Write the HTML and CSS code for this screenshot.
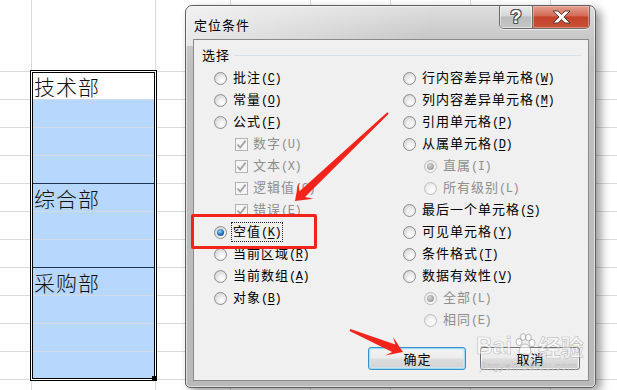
FILE: index.html
```html
<!DOCTYPE html>
<html lang="zh-CN">
<head>
<meta charset="utf-8">
<title>定位条件</title>
<link rel="stylesheet" href="styles.css">
</head>
<body>
<div class="sheet">
  <div class="sel">
    <div class="grp g1">
      <div class="cell active">技术部</div>
    </div>
    <div class="grp g2"><div class="cell">综合部</div></div>
    <div class="grp g3"><div class="cell">采购部</div></div>
    <span class="handle"></span>
  </div>
</div>

<div class="dialog">
  <div class="titlebar">
    <span class="title">定位条件</span>
    <div class="capbtns">
      <span class="cap help">?</span>
      <span class="cap close">
        <svg width="19" height="14" viewBox="0 0 19 14"><polygon points="1,1 6,1 9.5,4.6 13,1 18,1 12,7 18,13 13,13 9.5,9.4 6,13 1,13 7,7" fill="#fff" stroke="#5a3a34" stroke-width="1" stroke-linejoin="round"/></svg>
      </span>
    </div>
  </div>
  <div class="client">
    <div class="grouphead"><span class="glabel">选择</span><i class="gline"></i></div>
    <div class="cols">
      <div class="col left">
        <div class="opt"><span class="radio"></span><span class="lbl">批注<span class="key">(<u>C</u>)</span></span></div>
        <div class="opt"><span class="radio"></span><span class="lbl">常量<span class="key">(<u>O</u>)</span></span></div>
        <div class="opt"><span class="radio"></span><span class="lbl">公式<span class="key">(<u>F</u>)</span></span></div>
        <div class="opt sub off"><span class="chk"><svg width="11" height="11" viewBox="0 0 11 11"><path d="M1.5 5.5 L4.2 8.6 L9.6 1.6" fill="none" stroke="#a3a3a3" stroke-width="1.8"/></svg></span><span class="lbl">数字<span class="key">(U)</span></span></div>
        <div class="opt sub off"><span class="chk"><svg width="11" height="11" viewBox="0 0 11 11"><path d="M1.5 5.5 L4.2 8.6 L9.6 1.6" fill="none" stroke="#a3a3a3" stroke-width="1.8"/></svg></span><span class="lbl">文本<span class="key">(X)</span></span></div>
        <div class="opt sub off"><span class="chk"><svg width="11" height="11" viewBox="0 0 11 11"><path d="M1.5 5.5 L4.2 8.6 L9.6 1.6" fill="none" stroke="#a3a3a3" stroke-width="1.8"/></svg></span><span class="lbl">逻辑值<span class="key">(G)</span></span></div>
        <div class="opt sub off"><span class="chk"><svg width="11" height="11" viewBox="0 0 11 11"><path d="M1.5 5.5 L4.2 8.6 L9.6 1.6" fill="none" stroke="#a3a3a3" stroke-width="1.8"/></svg></span><span class="lbl">错误<span class="key">(E)</span></span></div>
        <div class="opt"><span class="radio on"></span><span class="lbl focus">空值<span class="key">(<u>K</u>)</span></span></div>
        <div class="opt"><span class="radio"></span><span class="lbl">当前区域<span class="key">(<u>R</u>)</span></span></div>
        <div class="opt"><span class="radio"></span><span class="lbl">当前数组<span class="key">(<u>A</u>)</span></span></div>
        <div class="opt"><span class="radio"></span><span class="lbl">对象<span class="key">(<u>B</u>)</span></span></div>
      </div>
      <div class="col right">
        <div class="opt"><span class="radio"></span><span class="lbl">行内容差异单元格<span class="key">(<u>W</u>)</span></span></div>
        <div class="opt"><span class="radio"></span><span class="lbl">列内容差异单元格<span class="key">(<u>M</u>)</span></span></div>
        <div class="opt"><span class="radio"></span><span class="lbl">引用单元格<span class="key">(<u>P</u>)</span></span></div>
        <div class="opt"><span class="radio"></span><span class="lbl">从属单元格<span class="key">(<u>D</u>)</span></span></div>
        <div class="opt sub off"><span class="radio dis on"></span><span class="lbl">直属<span class="key">(I)</span></span></div>
        <div class="opt sub off"><span class="radio dis"></span><span class="lbl">所有级别<span class="key">(L)</span></span></div>
        <div class="opt"><span class="radio"></span><span class="lbl">最后一个单元格<span class="key">(<u>S</u>)</span></span></div>
        <div class="opt"><span class="radio"></span><span class="lbl">可见单元格<span class="key">(<u>Y</u>)</span></span></div>
        <div class="opt"><span class="radio"></span><span class="lbl">条件格式<span class="key">(<u>T</u>)</span></span></div>
        <div class="opt"><span class="radio"></span><span class="lbl">数据有效性<span class="key">(<u>V</u>)</span></span></div>
        <div class="opt sub off"><span class="radio dis on"></span><span class="lbl">全部<span class="key">(L)</span></span></div>
        <div class="opt sub off"><span class="radio dis"></span><span class="lbl">相同<span class="key">(E)</span></span></div>
      </div>
    </div>
    <div class="btns">
      <span class="btn ok">确定</span>
      <span class="btn cancel">取消</span>
    </div>
  </div>
</div>

<div class="mark">
  <div class="mark-row">
    <span class="mark-en">Bai</span>
    <svg class="paw" width="24" height="24" viewBox="0 0 24 24">
      <g fill="rgba(255,255,255,.6)" stroke="rgba(110,110,110,.45)" stroke-width="1">
        <ellipse cx="6" cy="9" rx="3" ry="3.6"/>
        <ellipse cx="10" cy="4" rx="2.8" ry="3.4"/>
        <ellipse cx="15.5" cy="4.5" rx="2.8" ry="3.4"/>
        <ellipse cx="19" cy="10" rx="3" ry="3.6"/>
        <path d="M12 11 C16 11 19 17 17.5 20 C16 22.5 13 21 12 21 C11 21 8 22.5 6.5 20 C5 17 8 11 12 11 Z"/>
      </g>
    </svg>
    <span class="mark-cn">经验</span>
  </div>
  <div class="mark-url">jingyan.baidu.com</div>
</div>

<div class="hilite"></div>

<svg class="arrows" width="617" height="390" viewBox="0 0 617 390">
  <polygon points="295,201 313.5,198.7 305,197 388.7,113.7 387.3,112.3 299.5,191.2 298.3,182.7" fill="#f2231b"/>
  <polygon points="403,352 385.3,355.5 392.2,351.9 349.6,330.9 350.4,329.1 395.3,344.5 393,337" fill="#f2231b"/>
</svg>
</body>
</html>
```

FILE: styles.css
```css
* { box-sizing: border-box; }
html, body { margin: 0; padding: 0; }
body {
  width: 617px;
  height: 390px;
  overflow: hidden;
  position: relative;
  background: #fff;
  font-family: "Noto Sans CJK SC", "Noto Sans", sans-serif;
  color: #000;
}

/* ---------- spreadsheet ---------- */
.sheet {
  width: 617px;
  height: 390px;
  display: grid;
  grid-template-columns: 30px 127px 1fr;
  grid-template-rows: 70px 311px 1fr;
  background-image:
    repeating-linear-gradient(to bottom, #dadada 0 1px, transparent 1px 28px),
    linear-gradient(to right,
      transparent 0 31px, #dadada 31px 32px,
      transparent 32px 155px, #dadada 155px 156px,
      transparent 156px 230px, #dadada 230px 231px,
      transparent 231px 310px, #dadada 310px 311px,
      transparent 311px 390px, #dadada 390px 391px,
      transparent 391px 470px, #dadada 470px 471px,
      transparent 471px 550px, #dadada 550px 551px,
      transparent 551px);
  background-repeat: no-repeat;
  background-size: 100% 330px, 100% 100%;
  background-position: 0 71px, 0 0;
}
.sel {
  grid-column: 2;
  grid-row: 2;
  position: relative;
  border: 3px double #000;
  display: flex;
  flex-direction: column;
  background: #fff;
}
.grp {
  background: repeating-linear-gradient(to bottom, #b7d8fc 0 27px, #d2dbe5 27px 28px);
}
.g1 {
  height: 111px;
  border-bottom: 1px solid #1d3450;
  background: repeating-linear-gradient(to bottom, #b7d8fc 0 26px, #d2dbe5 26px 27px, #b7d8fc 27px 28px);
}
.g2 { height: 84px; border-bottom: 1px solid #1d3450; }
.g3 { height: 110px; }
.cell {
  font-size: 21px;
  font-weight: 300;
  letter-spacing: 1px;
  padding-left: 1px;
  height: 27px;
  line-height: 29px;
  color: #111;
}
.cell.active {
  height: 26px;
  line-height: 27px;
  background: #fff;
}
.handle {
  position: absolute;
  right: -3px;
  bottom: -3px;
  width: 5px;
  height: 5px;
  background: #000;
}

/* ---------- dialog ---------- */
.dialog {
  position: absolute;
  left: 185px;
  top: 5px;
  width: 411px;
  height: 383px;
  border: 1px solid #5c5f63;
  border-radius: 7px 7px 5px 5px;
  padding: 0 6px 6px 7px;
  display: flex;
  flex-direction: column;
  background:
    linear-gradient(100deg, rgba(255,255,255,.6) 0, rgba(255,255,255,.25) 35%, rgba(255,255,255,0) 60%) 0 0 / 100% 40px no-repeat,
    linear-gradient(to bottom, #dedede 0, #c9c9c9 30px, #c0c0c0 60px, #b9b9b9 100%);
  box-shadow: inset 0 0 0 1px rgba(255,255,255,.55), 5px 4px 10px rgba(0,0,0,.4);
}
.titlebar {
  height: 33px;
  display: flex;
  align-items: flex-start;
}
.title {
  padding: 11px 0 0 1px;
  font-size: 13px;
  line-height: 16px;
  letter-spacing: 1px;
}
.capbtns {
  margin-left: auto;
  margin-right: -1px;
  display: flex;
  height: 23px;
  border: 1px solid #6a6a6a;
  border-top: none;
  border-radius: 0 0 5px 5px;
  overflow: hidden;
  box-shadow: 0 1px 0 rgba(255,255,255,.6);
}
.cap {
  display: flex;
  align-items: center;
  justify-content: center;
}
.help {
  width: 33px;
  border-right: 1px solid #6a6a6a;
  background: linear-gradient(to bottom, #eaeaea 0, #d6d6d6 45%, #bcbcbc 50%, #c6c6c6 100%);
  box-shadow: inset 0 0 0 1px rgba(255,255,255,.5);
  font-family: "Liberation Sans", sans-serif;
  font-weight: bold;
  font-size: 18px;
  line-height: 20px;
  color: #fff;
  text-shadow: 1px 0 #4f4f4f, -1px 0 #4f4f4f, 0 1px #4f4f4f, 0 -1px #4f4f4f, 1px 1px #4f4f4f, -1px -1px #4f4f4f, 1px -1px #4f4f4f, -1px 1px #4f4f4f;
}
.close {
  width: 56px;
  background: linear-gradient(to bottom, #e4a090 0, #d46a55 45%, #c2412a 50%, #c95237 100%);
  box-shadow: inset 0 0 0 1px rgba(255,210,200,.45);
}

.client {
  flex: 1;
  border: 1px solid #8a8a8a;
  background: #f0f0f0;
  padding: 7px 7px 10px 8px;
  display: flex;
  flex-direction: column;
  font-size: 13px;
}
.grouphead {
  display: flex;
  align-items: center;
  height: 16px;
  line-height: 16px;
}
.glabel { letter-spacing: 1px; }
.gline {
  flex: 1;
  height: 1px;
  margin-left: 4px;
  background: #d5dfe5;
}
.cols {
  display: flex;
  margin-top: 4px;
}
.col.left {
  width: 201px;
  padding-left: 12px;
}
.col.right { flex: 1; }
.opt {
  display: flex;
  align-items: center;
  height: 22px;
  gap: 6px;
  white-space: nowrap;
}
.opt.sub { padding-left: 21px; }
.opt.off { color: #8e8e8e; }
.lbl {
  line-height: 16px;
  letter-spacing: 1px;
}
.key {
  font-family: "Liberation Mono", monospace;
  font-size: 12px;
  letter-spacing: -0.5px;
}
.key u { text-underline-offset: 2px; }
.focus {
  border: 1px dotted #222;
  padding: 0 1px;
  margin-left: -2px;
}

.radio {
  flex: none;
  width: 13px;
  height: 13px;
  border-radius: 50%;
  border: 1px solid #8d8d8d;
  background: radial-gradient(circle at 62% 68%, #ffffff 0, #efefef 35%, #cfcfcf 90%);
  display: grid;
  place-items: center;
}
.radio.on::after {
  content: "";
  width: 7px;
  height: 7px;
  border-radius: 50%;
  background: radial-gradient(circle at 40% 35%, #9ad8ff 0, #2c7fc4 45%, #0b3a6b 100%);
}
.radio.dis {
  border-color: #bdbdbd;
  background: radial-gradient(circle at 62% 68%, #ffffff 0, #f4f4f4 40%, #e2e2e2 90%);
}
.radio.dis.on::after {
  background: radial-gradient(circle at 40% 35%, #d8d8d8 0, #a8a8a8 55%, #8a8a8a 100%);
}
.chk {
  flex: none;
  width: 13px;
  height: 13px;
  border: 1px solid #b2b2b2;
  background: #f5f5f5;
  display: grid;
  place-items: center;
  margin-right: -1px;
}

.btns {
  margin-top: auto;
  margin-right: 1px;
  display: flex;
  justify-content: flex-end;
  gap: 14px;
}
.btn {
  height: 23px;
  border-radius: 3px;
  display: flex;
  align-items: center;
  justify-content: center;
  font-size: 13px;
  letter-spacing: 1px;
  padding-left: 1px;
}
.btn.ok {
  width: 98px;
  border: 1px solid #3c8fc8;
  background: linear-gradient(to bottom, #f3f3f3 0, #ececec 48%, #dddddd 52%, #d2d2d2 100%);
  box-shadow: inset 0 0 0 1px #9fdcf6, inset 0 0 0 2px rgba(200,238,252,.6);
}
.btn.cancel {
  width: 100px;
  border: 1px solid #707070;
  background: linear-gradient(to bottom, #f2f2f2 0, #ebebeb 48%, #dddddd 52%, #cfcfcf 100%);
  box-shadow: inset 0 0 0 1px #fbfbfb;
}

/* ---------- overlays ---------- */
.mark {
  position: absolute;
  left: 476px;
  top: 332px;
  display: flex;
  flex-direction: column;
  align-items: flex-start;
  pointer-events: none;
}
.mark-row {
  display: flex;
  align-items: flex-end;
  gap: 1px;
}
.mark-en, .mark-cn {
  font-size: 23px;
  line-height: 28px;
  font-weight: bold;
  color: rgba(255,255,255,.55);
  -webkit-text-stroke: 0.7px rgba(110,110,110,.4);
}
.mark-en { font-family: "Liberation Sans", sans-serif; }
.paw { margin-bottom: 3px; }
.mark-url {
  font-family: "Liberation Sans", sans-serif;
  font-size: 11px;
  line-height: 12px;
  letter-spacing: 0.5px;
  margin-left: 4px;
  color: rgba(255,255,255,.6);
  -webkit-text-stroke: 0.5px rgba(110,110,110,.35);
}
.hilite {
  position: absolute;
  left: 191px;
  top: 214px;
  width: 126px;
  height: 35px;
  border: 3px solid #f2231b;
  border-radius: 2px;
}
.arrows {
  position: absolute;
  left: 0;
  top: 0;
  pointer-events: none;
}
```
